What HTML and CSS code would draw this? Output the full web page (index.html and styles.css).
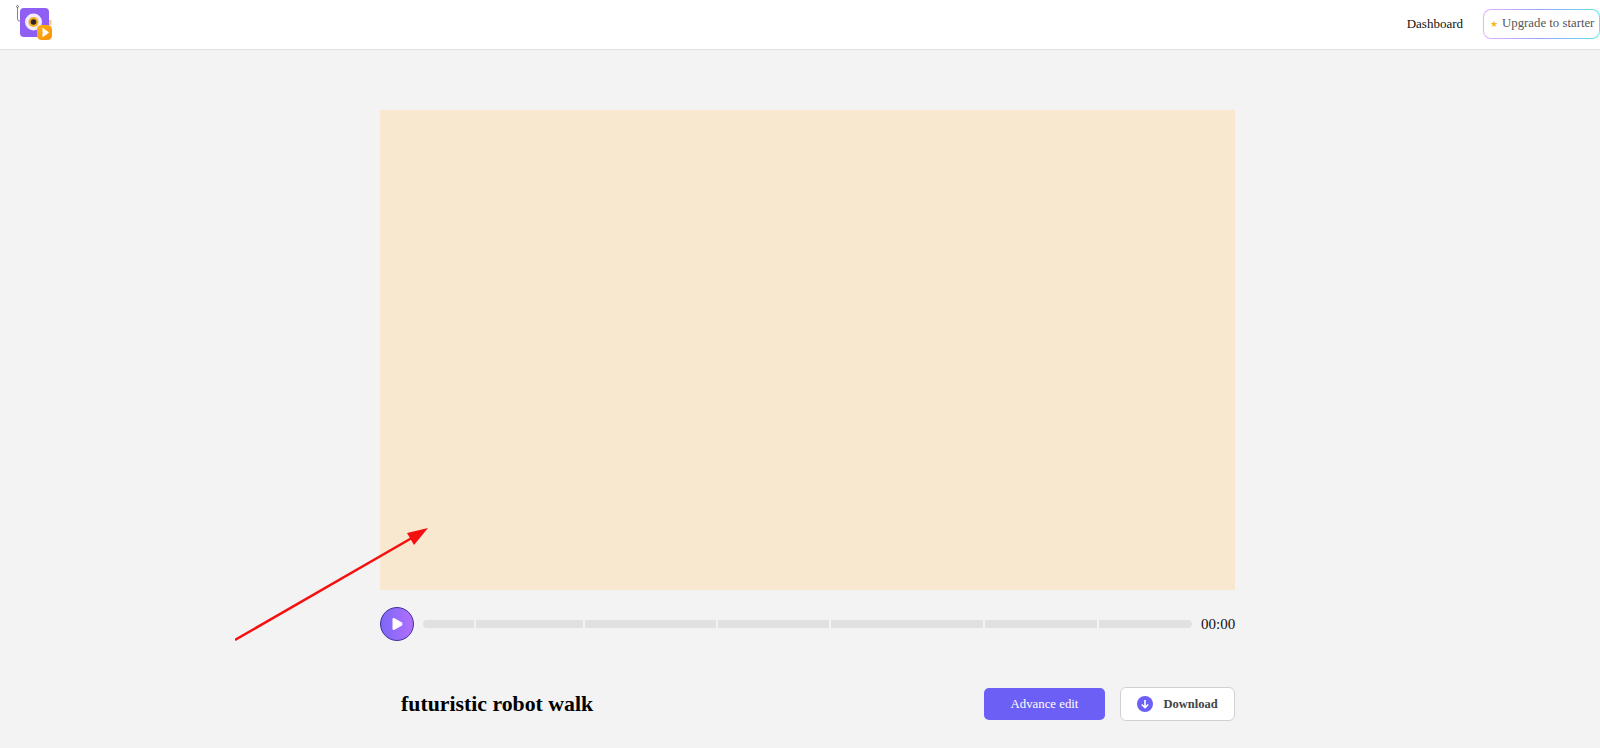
FILE: index.html
```html
<!DOCTYPE html>
<html lang="en">
<head>
  <meta charset="UTF-8">
  <meta name="viewport" content="width=device-width, initial-scale=1.0">
  <title>futuristic robot walk</title>
  <link rel="stylesheet" href="styles.css">
</head>
<body>
  <header class="topbar">
    <a class="logo" href="#" aria-label="Home">
      <svg width="60" height="49" viewBox="0 0 60 49">
        <defs>
          <linearGradient id="badgeFill" x1="0" y1="0" x2="1" y2="1">
            <stop offset="0" stop-color="#fdb40f"/>
            <stop offset="1" stop-color="#fb8f0c"/>
          </linearGradient>
        </defs>
        <path d="M17.500 7V19Q17.500 21 19.500 21H21" fill="none" stroke="#666" stroke-width="0.8"/>
        <circle cx="17.500" cy="6.500" r="1" fill="none" stroke="#555" stroke-width="0.7"/>
        <rect x="20" y="8" width="29" height="29" rx="4" fill="#8e5ff2"/>
        <circle cx="33.500" cy="22" r="8.500" fill="#f3ecff"/>
        <circle cx="33.500" cy="22" r="5" fill="#f0b01e"/>
        <circle cx="33.500" cy="22" r="2.800" fill="#2c2430"/>
        <rect x="49" y="20" width="2.500" height="5" fill="#f7c98a"/>
        <rect x="37" y="25" width="15" height="15" rx="4.500" fill="url(#badgeFill)"/>
        <path d="M42.500 28.500Q42.500 27.800 43.200 28.200L48.500 32Q49 32.500 48.500 33L43.200 36.800Q42.500 37.200 42.500 36.500Z" fill="#fff"/>
      </svg>
    </a>
    <nav class="topnav">
      <a class="nav-link" href="#">Dashboard</a>
      <a class="upgrade-btn" href="#"><span class="star">★</span>Upgrade to starter</a>
    </nav>
  </header>

  <main class="content">
    <div class="video"></div>

    <div class="player">
      <button class="play-btn" aria-label="Play">
        <svg width="14" height="14" viewBox="0 0 14 14"><path d="M2.500 2.500Q2.500 0.500 4.500 1.200L11.500 5.200Q13.500 7 11.500 8.800L4.500 12.800Q2.500 13.500 2.500 11.500Z" fill="#fff"/></svg>
      </button>
      <div class="track">
        <span class="seg seg-1"></span>
        <span class="seg seg-2"></span>
        <span class="seg seg-3"></span>
        <span class="seg seg-4"></span>
        <span class="seg seg-5"></span>
        <span class="seg seg-6"></span>
        <span class="seg seg-7"></span>
      </div>
      <span class="time">00:00</span>
    </div>

    <div class="info">
      <h1 class="title">futuristic robot walk</h1>
      <div class="actions">
        <button class="edit-btn">Advance edit</button>
        <button class="download-btn">
          <svg width="16" height="16" viewBox="0 0 16 16">
            <circle cx="8" cy="8" r="8" fill="#6c5ff5"/>
            <path d="M8 4V11.500M4.800 8.500L8 11.700L11.200 8.500" fill="none" stroke="#fff" stroke-width="1.600"/>
          </svg>
          Download
        </button>
      </div>
    </div>
  </main>

  <!-- annotation drawn on top of the screenshot -->
  <svg class="arrow" width="200" height="120" viewBox="0 0 200 120">
    <path d="M0 115L182 10" stroke="#f50f0f" stroke-width="2.500" fill="none"/>
    <path d="M193 3L172 8L179 20Z" fill="#f50f0f"/>
  </svg>
</body>
</html>
```

FILE: styles.css
```css
* {
  margin: 0;
  padding: 0;
  box-sizing: border-box;
}
body {
  font-family: 'Liberation Serif', serif;
  background: #f3f3f3;
  color: #000;
  min-height: 100vh;
  overflow: hidden;
  position: relative;
}
a {
  text-decoration: none;
}
button {
  font-family: inherit;
  cursor: pointer;
}
.topbar {
  height: 50px;
  background: #fff;
  border-bottom: 1px solid #e2e2e2;
  display: flex;
  align-items: center;
  justify-content: space-between;
}
.logo {
  display: block;
  height: 49px;
}
.logo svg {
  display: block;
}
.topnav {
  display: flex;
  align-items: center;
  gap: 20px;
  margin-bottom: 1px;
}
.nav-link {
  font-size: 13px;
  color: #111;
  margin-bottom: 1px;
}
.upgrade-btn {
  display: flex;
  align-items: center;
  gap: 4px;
  width: 117px;
  height: 30px;
  padding-left: 6px;
  padding-bottom: 1px;
  font-size: 12.800px;
  color: #555;
  white-space: nowrap;
  border: 1.500px solid transparent;
  border-radius: 8px;
  background: linear-gradient(#fff, #fff) padding-box,
    linear-gradient(90deg, #e6b3f6, #9aa4fa, #63e6ea) border-box;
}
.star {
  color: #f5b91d;
  font-size: 9px;
}
.content {
  width: 855px;
  margin: 60px 0 0 380px;
}
.video {
  height: 480px;
  background: #f7e8cf;
}
.player {
  display: flex;
  align-items: center;
  gap: 9px;
  margin-top: 17px;
}
.play-btn {
  width: 34px;
  height: 34px;
  flex-shrink: 0;
  display: flex;
  align-items: center;
  justify-content: center;
  border: 1px solid #3f2f9c;
  border-radius: 50%;
  background: linear-gradient(90deg, #7d68f8, #b06ffa);
}
.track {
  flex: 1;
  display: flex;
  gap: 2px;
  height: 8px;
}
.seg {
  background: #e1e1e1;
}
.seg-1 { width: 51px; border-radius: 4px 0 0 4px; }
.seg-2 { width: 107px; }
.seg-3 { width: 131px; }
.seg-4 { width: 111px; }
.seg-5 { width: 152px; }
.seg-6 { width: 112px; }
.seg-7 { flex: 1; border-radius: 0 4px 4px 0; }
.time {
  font-size: 15px;
  width: 34px;
  text-align: right;
  color: #111;
  white-space: nowrap;
}
.info {
  display: flex;
  align-items: center;
  justify-content: space-between;
  margin-top: 46px;
  padding-left: 21px;
}
.title {
  font-size: 21.800px;
  font-weight: 700;
  color: #000;
}
.actions {
  display: flex;
  align-items: center;
  gap: 15px;
}
.edit-btn {
  width: 121px;
  height: 32px;
  border: none;
  border-radius: 5px;
  background: #6c5ff5;
  color: #fff;
  font-size: 12.800px;
}
.download-btn {
  width: 115px;
  height: 34px;
  display: flex;
  align-items: center;
  justify-content: center;
  gap: 10px;
  border: 1px solid #d0d0d4;
  border-radius: 6px;
  background: #fff;
  color: #444;
  font-size: 12.500px;
  font-weight: 700;
}
.arrow {
  position: absolute;
  left: 235px;
  top: 525px;
}
```
